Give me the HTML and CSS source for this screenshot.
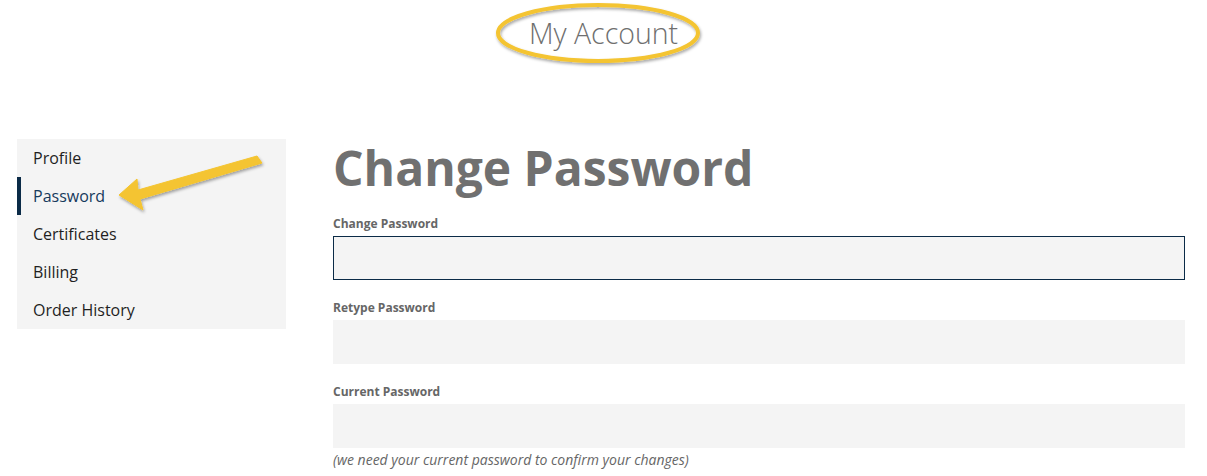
FILE: index.html
```html
<!DOCTYPE html>
<html>
<head>
<meta charset="utf-8">
<link rel="stylesheet" href="styles.css">
</head>
<body>
<header class="top">
  <h1 class="page-title">My Account</h1>
</header>
<main class="layout">
  <nav class="sidenav">
    <a class="nav-item">Profile</a>
    <a class="nav-item active">Password</a>
    <a class="nav-item">Certificates</a>
    <a class="nav-item">Billing</a>
    <a class="nav-item">Order History</a>
  </nav>
  <section class="content">
    <h2 class="heading">Change Password</h2>
    <div class="field">
      <label class="label">Change Password</label>
      <div class="input focused"></div>
    </div>
    <div class="field">
      <label class="label">Retype Password</label>
      <div class="input"></div>
    </div>
    <div class="field">
      <label class="label">Current Password</label>
      <div class="input"></div>
      <p class="help">(we need your current password to confirm your changes)</p>
    </div>
  </section>
</main>
<svg class="annot-ellipse" width="220" height="76" viewBox="0 0 220 76">
  <defs>
    <filter id="sh" x="-20%" y="-40%" width="140%" height="180%">
      <feDropShadow dx="1" dy="2" stdDeviation="1.6" flood-color="#000" flood-opacity="0.35"/>
    </filter>
  </defs>
  <ellipse cx="108" cy="33" rx="100" ry="28" fill="none" stroke="#f4c430" stroke-width="4" filter="url(#sh)"/>
</svg>
<svg class="annot-arrow" width="170" height="80" viewBox="0 0 170 80">
  <defs>
    <filter id="sh2" x="-20%" y="-40%" width="140%" height="180%">
      <feDropShadow dx="1" dy="2" stdDeviation="1.6" flood-color="#000" flood-opacity="0.35"/>
    </filter>
  </defs>
  <path d="M147 6 L152 13 L30 49 L33 60 L9 45 L27 29 L28 40 Z" fill="#f4c430" stroke="#f4c430" stroke-width="1" stroke-linejoin="round" filter="url(#sh2)"/>
</svg>
</body>
</html>
```
FILE: styles.css
```css
* { box-sizing: border-box; }
html, body { margin: 0; padding: 0; }
body {
  font-family: "Open Sans", "Liberation Sans", sans-serif;
  background: #fff;
  width: 1207px;
  height: 476px;
  overflow: hidden;
  position: relative;
}
.top {
  height: 139px;
  padding-top: 13px;
  text-align: center;
}
.page-title {
  margin: 0;
  font-size: 28.5px;
  line-height: 40px;
  font-weight: 300;
  color: #6f6f6f;
}
.layout {
  display: flex;
  align-items: flex-start;
  padding-left: 17px;
}
.sidenav {
  width: 269px;
  background: #f4f4f4;
  display: flex;
  flex-direction: column;
  flex-shrink: 0;
}
.nav-item {
  display: block;
  height: 38px;
  line-height: 38px;
  font-size: 16px;
  color: #1f1f1f;
  border-left: 4px solid transparent;
  padding-left: 12px;
}
.nav-item.active {
  border-left-color: #0b2b47;
  color: #163a5c;
}
.content {
  margin-left: 47px;
  width: 852px;
}
.heading {
  margin: 0 0 19px 0;
  font-size: 48px;
  line-height: 58px;
  font-weight: 700;
  color: #707070;
}
.field {
  margin-bottom: 20px;
}
.label {
  display: block;
  font-size: 12px;
  line-height: 16px;
  font-weight: 700;
  color: #666;
  margin-bottom: 4px;
}
.input {
  height: 44px;
  background: #f4f4f4;
  border: 1px solid #f4f4f4;
}
.input.focused {
  border-color: #0b2b47;
}
.help {
  margin: 2px 0 0 0;
  font-size: 14px;
  line-height: 20px;
  font-style: italic;
  color: #666;
}
.annot-ellipse {
  position: absolute;
  left: 490px;
  top: 0;
}
.annot-arrow {
  position: absolute;
  left: 110px;
  top: 150px;
}
```
